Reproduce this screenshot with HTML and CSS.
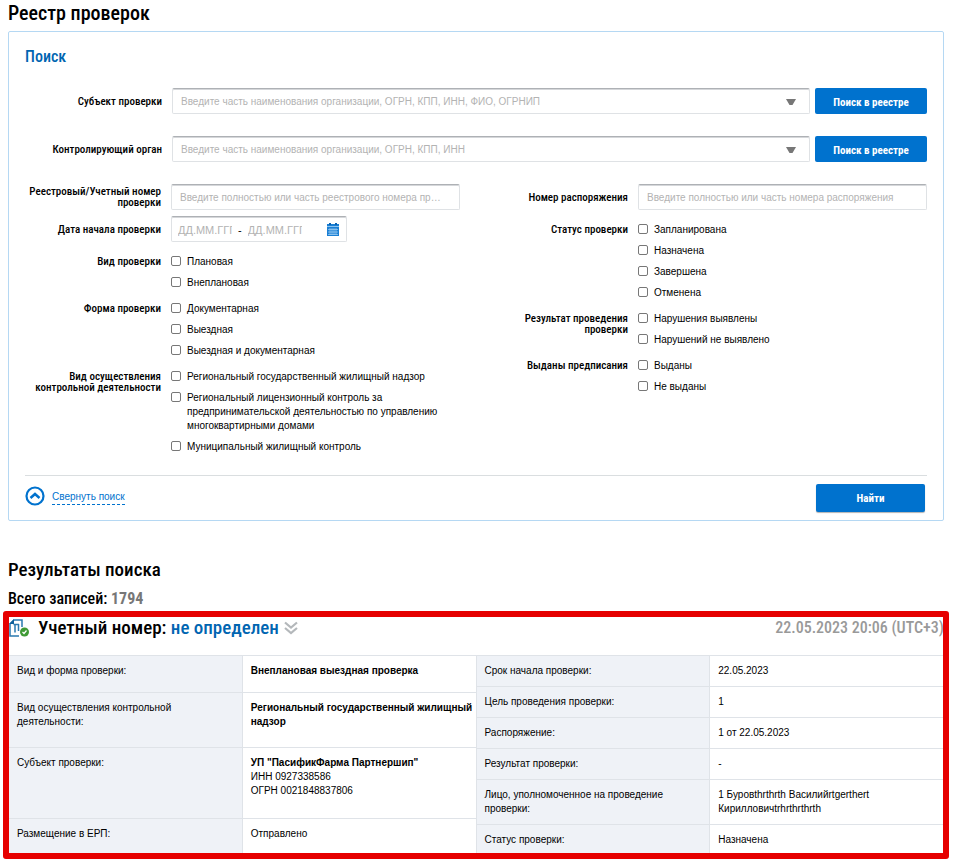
FILE: index.html
```html
<!DOCTYPE html>
<html lang="ru">
<head>
    <meta charset="UTF-8">
    <meta name="viewport" content="width=device-width, initial-scale=1.0">
    <title>Реестр проверок</title>
    <link rel="stylesheet" href="styles.css">
</head>
<body>
    <h1>Реестр проверок</h1>
    <form class="search">
        <h2>Поиск</h2>
        <div class="lookup">
            <label for="subject">Субъект проверки</label>
            <div class="combo">
                <input type="text" id="subject" placeholder="Введите часть наименования организации, ОГРН, КПП, ИНН, ФИО, ОГРНИП">
                <svg class="arrow" viewBox="0 0 10 6"><path d="M0 0h10L6.500 6h-3z" fill="#777"/></svg>
            </div>
            <button type="button" class="btn">Поиск в реестре</button>
        </div>
        <div class="lookup">
            <label for="organ">Контролирующий орган</label>
            <div class="combo">
                <input type="text" id="organ" placeholder="Введите часть наименования организации, ОГРН, КПП, ИНН">
                <svg class="arrow" viewBox="0 0 10 6"><path d="M0 0h10L6.500 6h-3z" fill="#777"/></svg>
            </div>
            <button type="button" class="btn">Поиск в реестре</button>
        </div>
        <div class="columns">
            <div class="column">
                <div class="field">
                    <label for="regnum">Реестровый/Учетный номер проверки</label>
                    <input type="text" id="regnum" placeholder="Введите полностью или часть реестрового номера проверки">
                </div>
                <div class="field">
                    <label for="date-from">Дата начала проверки</label>
                    <div class="dates">
                        <input type="text" id="date-from" placeholder="ДД.ММ.ГГГГ">
                        <span>-</span>
                        <input type="text" aria-label="Дата окончания" placeholder="ДД.ММ.ГГГГ">
                        <svg class="calendar" viewBox="0 0 12 13">
                            <path d="M0 1h12v12H0z" fill="#1a7fd4"/>
                            <path d="M2 0h2v2H2zM8 0h2v2H8z" fill="#0a62b0"/>
                            <path d="M0 3h12v1H0z" fill="#8cc4f0"/>
                            <path d="M1 6.500h10M1 9h10M1 11.500h10M3 5v7M5 5v7M7 5v7M9 5v7" stroke="#b5daf7" stroke-width=".6"/>
                        </svg>
                    </div>
                </div>
                <fieldset class="field group">
                    <legend>Вид проверки</legend>
                    <div class="options">
                        <label><input type="checkbox"> Плановая</label>
                        <label><input type="checkbox"> Внеплановая</label>
                    </div>
                </fieldset>
                <fieldset class="field group">
                    <legend>Форма проверки</legend>
                    <div class="options">
                        <label><input type="checkbox"> Документарная</label>
                        <label><input type="checkbox"> Выездная</label>
                        <label><input type="checkbox"> Выездная и документарная</label>
                    </div>
                </fieldset>
                <fieldset class="field group">
                    <legend>Вид осуществления контрольной деятельности</legend>
                    <div class="options">
                        <label><input type="checkbox"> Региональный государственный жилищный надзор</label>
                        <label><input type="checkbox"> Региональный лицензионный контроль за предпринимательской деятельностью по управлению многоквартирными домами</label>
                        <label><input type="checkbox"> Муниципальный жилищный контроль</label>
                    </div>
                </fieldset>
            </div>
            <div class="column">
                <div class="field">
                    <label for="order">Номер распоряжения</label>
                    <input type="text" id="order" placeholder="Введите полностью или часть номера распоряжения">
                </div>
                <fieldset class="field group">
                    <legend>Статус проверки</legend>
                    <div class="options">
                        <label><input type="checkbox"> Запланирована</label>
                        <label><input type="checkbox"> Назначена</label>
                        <label><input type="checkbox"> Завершена</label>
                        <label><input type="checkbox"> Отменена</label>
                    </div>
                </fieldset>
                <fieldset class="field group">
                    <legend>Результат проведения проверки</legend>
                    <div class="options">
                        <label><input type="checkbox"> Нарушения выявлены</label>
                        <label><input type="checkbox"> Нарушений не выявлено</label>
                    </div>
                </fieldset>
                <fieldset class="field group">
                    <legend>Выданы предписания</legend>
                    <div class="options">
                        <label><input type="checkbox"> Выданы</label>
                        <label><input type="checkbox"> Не выданы</label>
                    </div>
                </fieldset>
            </div>
        </div>
        <div class="search-footer">
            <a href="#" class="collapse">
                <svg viewBox="0 0 20 20" fill="none" stroke="#0072ce"><circle cx="10" cy="10" r="8.500" stroke-width="2.200"/><path d="M5.500 12l4.500-4 4.500 4" stroke-width="2.500"/></svg>
                <span>Свернуть поиск</span>
            </a>
            <button type="submit" class="btn btn-find">Найти</button>
        </div>
    </form>

    <h1 class="results-title">Результаты поиска</h1>
    <p class="total">Всего записей: <b>1794</b></p>

    <article class="record">
        <header class="record-header">
            <svg class="doc" viewBox="0 0 21 18">
                <path d="M10 17H1V5l4-4h8v7" fill="none" stroke="#2a7ab0" stroke-width="1.500"/>
                <path d="M0 5l5-5v5z" fill="#0f5f9a"/>
                <path d="M4.500 5.500H10M6 5v8.500M9.500 5v7" fill="none" stroke="#2a7ab0" stroke-width="1.500"/>
                <circle cx="15.500" cy="13" r="4.500" fill="#3f9a35"/>
                <path d="M13.500 13l1.500 1.500 2.500-3" fill="none" stroke="#fff" stroke-width="1.200"/>
            </svg>
            <h3>Учетный номер: <a href="#">не определен</a></h3>
            <svg class="chevrons" viewBox="0 0 14 14" fill="none" stroke="#b4b8bb" stroke-width="2.200"><path d="M1 1.500l6 5 6-5M1 7l6 5 6-5"/></svg>
            <time>22.05.2023 20:06 (UTC+3)</time>
        </header>
        <div class="tables">
            <table>
                <tr><th>Вид и форма проверки:</th><td><b>Внеплановая выездная проверка</b></td></tr>
                <tr><th>Вид осуществления контрольной деятельности:</th><td><b>Региональный государственный жилищный надзор</b></td></tr>
                <tr><th>Субъект проверки:</th><td><b>УП "ПасификФарма Партнершип"</b><br>ИНН 0927338586<br>ОГРН 0021848837806</td></tr>
                <tr><th>Размещение в ЕРП:</th><td>Отправлено</td></tr>
            </table>
            <table>
                <tr><th>Срок начала проверки:</th><td>22.05.2023</td></tr>
                <tr><th>Цель проведения проверки:</th><td>1</td></tr>
                <tr><th>Распоряжение:</th><td>1 от 22.05.2023</td></tr>
                <tr><th>Результат проверки:</th><td>-</td></tr>
                <tr><th>Лицо, уполномоченное на проведение проверки:</th><td>1 Буровthrthrth Василийrtgerthert Кирилловичtrhrthrthrth</td></tr>
                <tr><th>Статус проверки:</th><td>Назначена</td></tr>
            </table>
        </div>
    </article>
</body>
</html>
```
FILE: styles.css
```css
* { box-sizing: border-box; }
body { margin: 0; padding: 0 9px 5px 8px; font-family: Helvetica, "Liberation Sans", Arial, sans-serif; font-size: 10px; line-height: 14px; color: #000; background: #fff; }
h1, h2, h3, legend, .lookup > label, .field > label, .btn, .total, time { font-family: "Roboto Condensed", "Liberation Sans Narrow", sans-serif; font-weight: 500; }
h1 { margin: 0; padding-top: 1px; font-size: 20px; line-height: 24px; }
a { color: #0065b1; text-decoration: none; }
input { font: inherit; color: #000; }
input::placeholder { color: #b3b3b3; opacity: 1; }

.search { margin-top: 6px; padding: 15px 16px 8px; border: 1px solid #b5d8f3; border-radius: 2px; }
.search h2 { margin: 0 0 21px; font-size: 16px; line-height: 20px; color: #0065b1; }
.search input[type=text] { width: 100%; height: 26px; padding: 1px 18px 0 8px; border: 1px solid #dfe2e5; border-top-color: #aeb1b5; border-radius: 2px; background: #fff; box-shadow: inset 0 1px #d5d7da; text-overflow: ellipsis; }

.lookup { display: flex; align-items: center; margin-bottom: 22px; }
.lookup > label { width: 137px; margin-right: 10px; padding-top: 2px; text-align: right; font-size: 11px; line-height: 12px; }
.combo { position: relative; flex: 1; margin-right: 5px; }
.combo input { display: block; }
.arrow { position: absolute; right: 14px; top: 11px; width: 10px; height: 6px; pointer-events: none; }
.btn { width: 112px; height: 26px; padding: 2px 0 0; border: 0; border-radius: 2px; background: #0072ce; color: #fff; font-size: 11px; font-weight: 700; }

.columns { display: grid; grid-template-columns: 1fr 1fr; gap: 32px; }
.column { display: flex; flex-direction: column; gap: 6px; }
.field { display: grid; grid-template-columns: 136px 1fr; column-gap: 10px; align-items: center; margin: 0; padding: 0; border: 0; min-width: 0; }
.field > label, legend { text-align: right; font-size: 11px; line-height: 11px; }
.dates { display: flex; align-items: center; gap: 6px; width: 176px; height: 26px; padding: 1px 7px 0 6px; border: 1px solid #dfe2e5; border-top-color: #aeb1b5; border-radius: 2px; box-shadow: inset 0 1px #d5d7da; font-size: 11px; }
.search .dates input { width: 54px; height: 20px; padding: 0; border: 0; box-shadow: none; text-overflow: clip; }
.calendar { width: 12px; height: 13px; margin-left: auto; }
.group { align-items: start; padding-top: 7px; margin-bottom: -1px; }
.group legend { float: left; width: 100%; padding: 1px 0 0; }
.options { display: flex; flex-direction: column; gap: 7px; }
.options label { display: block; padding-left: 16px; padding-right: 16px; }
.options input { appearance: none; float: left; width: 10px; height: 10px; margin: 1px 0 0 -16px; border: 1px solid #777; border-radius: 2px; background: #fff; }

.search-footer { display: flex; align-items: center; justify-content: space-between; margin-top: 22px; padding: 8px 2px 0 0; border-top: 1px solid #dadee0; }
.collapse { display: flex; align-items: center; gap: 7px; margin-top: -4px; color: #0072ce; }
.collapse svg { width: 20px; height: 20px; }
.collapse span { padding-top: 2px; border-bottom: 1px dashed #0072ce; }
.btn-find { width: 109px; height: 28px; padding: 0; box-shadow: 0 1px 1px rgba(0,0,0,.3); }

.results-title { margin-top: 36px; font-size: 19px; }
.total { margin: 7px 0 0; font-size: 16px; line-height: 20px; }
.total b { color: #777; }

.record { position: relative; margin-top: 2px; padding: 6px 0 4px 1px; }
/* red highlight frame around the record */
.record::after { content: ""; position: absolute; inset: 0 -5px; border: 6px solid #e60000; border-radius: 3px; pointer-events: none; }
.record-header { display: flex; align-items: center; height: 38px; padding-bottom: 16px; }
.record h3 { margin: 0; font-size: 19px; line-height: 22px; }
.doc { width: 21px; height: 18px; margin-right: 8px; }
.chevrons { width: 14px; height: 14px; margin-left: 5px; }
.record time { margin-left: auto; font-size: 16px; color: #999; }
.tables { display: grid; grid-template-columns: 1fr 1fr; }
table { width: 100%; height: 100%; table-layout: fixed; border-collapse: separate; border-spacing: 0; }
th, td { padding: 8px; border-top: 1px solid #dfe3e8; text-align: left; vertical-align: top; font-weight: 400; }
th { background: #eff2f7; border-right: 1px solid #dfe3e8; }
td { padding-right: 0; border-right: 1px solid #dfe3e8; }
```
